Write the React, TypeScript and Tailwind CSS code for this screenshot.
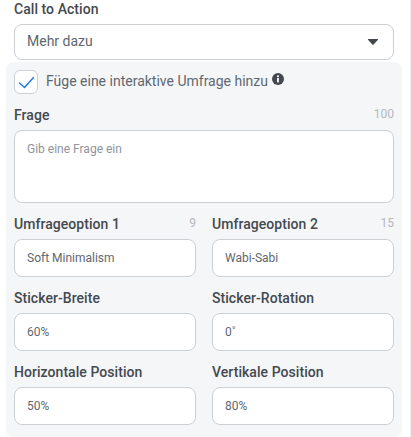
function Field({ label, value, count }: { label: string; value: string; count?: string }) {
  return (
    <div className="w-[182px]">
      <div className="flex h-5 items-center justify-between">
        <span className="text-[14px] font-medium tracking-[0.05px] text-[#444950]">{label}</span>
        {count && <span className="-mt-[3px] text-[12px] text-[#b4b8bf]">{count}</span>}
      </div>
      <div className="mt-[5px] flex h-[38px] items-center rounded-lg border border-[#ccd0d5] bg-white pl-[12px] text-[12px] text-[#606770]">
        {value}
      </div>
    </div>
  );
}

export default function App() {
  return (
    <div className="relative h-[437px] w-[411px] overflow-hidden bg-white font-['Roboto',sans-serif]">
      <div className="absolute right-0 top-0 h-full w-px bg-[#eceef1]" />
      <div className="px-[14px]">
        <div className="flex h-[18px] items-center text-[14px] font-medium tracking-[0.05px] text-[#444950]">Call to Action</div>
        <div className="mt-[6px] flex h-[36px] w-[380px] items-center justify-between rounded-lg border border-[#ccd0d5] bg-white pb-[2px] pl-[12px] pr-[15px] text-[14px] text-[#606770]">
          <span>Mehr dazu</span>
          <svg width="10" height="6" viewBox="0 0 10 6" className="mt-[2px] fill-[#444950]">
            <path d="M0.6 0h8.8a.5.5 0 0 1 .4.9L5.4 5.7a.6.6 0 0 1-.8 0L.2.9A.5.5 0 0 1 .6 0z" />
          </svg>
        </div>
      </div>

      <div className="ml-[6px] mt-[2px] h-[375px] w-[396px] rounded-lg bg-[#f5f6f7] px-[8px] pt-[8px]">
        <div className="flex items-center">
          <div className="h-[24px] w-[24px] rounded-[6px] border border-[#ccd0d5] bg-white">
            <svg width="22" height="22" viewBox="0 0 22 22" fill="none" stroke="#1877f2" strokeWidth="1.4" strokeLinecap="round" strokeLinejoin="round">
              <path d="M4.5 12l5 4.5 9-10" />
            </svg>
          </div>
          <span className="mb-[2px] ml-[8px] text-[14px] text-[#606770]">Füge eine interaktive Umfrage hinzu</span>
          <svg width="12" height="12" viewBox="0 0 12 12" className="mb-[6px] ml-[4px]">
            <circle cx="6" cy="6" r="6" fill="#444950" />
            <rect x="5.1" y="5" width="1.8" height="4.4" fill="#fff" />
            <circle cx="6" cy="3.3" r="1.05" fill="#fff" />
          </svg>
        </div>

        <div className="mt-[11px] flex h-5 w-[380px] items-center justify-between">
          <span className="text-[14px] font-medium tracking-[0.05px] text-[#444950]">Frage</span>
          <span className="-mt-[3px] text-[12px] text-[#b4b8bf]">100</span>
        </div>
        <div className="mt-[5px] h-[73px] w-[380px] rounded-lg border border-[#ccd0d5] bg-white pl-[12px] pt-[9px] text-[12px] text-[#90949c]">
          Gib eine Frage ein
        </div>

        <div className="mt-[11px] grid w-[380px] grid-cols-[182px_182px] gap-x-[16px] gap-y-[11px]">
          <Field label="Umfrageoption 1" value="Soft Minimalism" count="9" />
          <Field label="Umfrageoption 2" value="Wabi-Sabi" count="15" />
          <Field label="Sticker-Breite" value="60%" />
          <Field label="Sticker-Rotation" value="0˚" />
          <Field label="Horizontale Position" value="50%" />
          <Field label="Vertikale Position" value="80%" />
        </div>
      </div>
    </div>
  );
}
